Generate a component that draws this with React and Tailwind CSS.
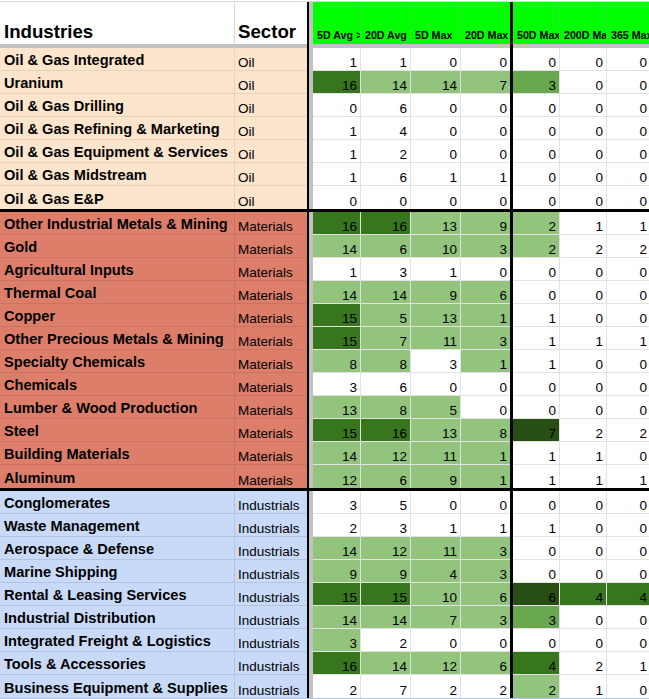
import React from 'react';

const fills = {
  '.': 'bg-white',
  l: 'bg-[#93c47d]',
  m: 'bg-[#6aa84f]',
  d: 'bg-[#38761d]',
  x: 'bg-[#274e13]',
};

const groups = [
  {
    sector: 'Oil',
    bg: 'bg-[#fce5cd]',
    line: 'border-[#e8d2bc]',
    rows: [
      ['Oil & Gas Integrated', [1, 1, 0, 0, 0, 0, 0], '.......'],
      ['Uranium', [16, 14, 14, 7, 3, 0, 0], 'dlllm..'],
      ['Oil & Gas Drilling', [0, 6, 0, 0, 0, 0, 0], '.......'],
      ['Oil & Gas Refining & Marketing', [1, 4, 0, 0, 0, 0, 0], '.......'],
      ['Oil & Gas Equipment & Services', [1, 2, 0, 0, 0, 0, 0], '.......'],
      ['Oil & Gas Midstream', [1, 6, 1, 1, 0, 0, 0], '.......'],
      ['Oil & Gas E&P', [0, 0, 0, 0, 0, 0, 0], '.......'],
    ],
  },
  {
    sector: 'Materials',
    bg: 'bg-[#dd7e6b]',
    line: 'border-[#c87363]',
    rows: [
      ['Other Industrial Metals & Mining', [16, 16, 13, 9, 2, 1, 1], 'ddlll..'],
      ['Gold', [14, 6, 10, 3, 2, 2, 2], 'lllll..'],
      ['Agricultural Inputs', [1, 3, 1, 0, 0, 0, 0], '.......'],
      ['Thermal Coal', [14, 14, 9, 6, 0, 0, 0], 'llll...'],
      ['Copper', [15, 5, 13, 1, 1, 0, 0], 'dlll...'],
      ['Other Precious Metals & Mining', [15, 7, 11, 3, 1, 1, 1], 'dlll...'],
      ['Specialty Chemicals', [8, 8, 3, 1, 1, 0, 0], 'll.l...'],
      ['Chemicals', [3, 6, 0, 0, 0, 0, 0], '.......'],
      ['Lumber & Wood Production', [13, 8, 5, 0, 0, 0, 0], 'lll....'],
      ['Steel', [15, 16, 13, 8, 7, 2, 2], 'ddllx..'],
      ['Building Materials', [14, 12, 11, 1, 1, 1, 0], 'llll...'],
      ['Aluminum', [12, 6, 9, 1, 1, 1, 1], 'llll...'],
    ],
  },
  {
    sector: 'Industrials',
    bg: 'bg-[#c9daf8]',
    line: 'border-[#b2c4e3]',
    rows: [
      ['Conglomerates', [3, 5, 0, 0, 0, 0, 0], '.......'],
      ['Waste Management', [2, 3, 1, 1, 1, 0, 0], '.......'],
      ['Aerospace & Defense', [14, 12, 11, 3, 0, 0, 0], 'llll...'],
      ['Marine Shipping', [9, 9, 4, 3, 0, 0, 0], 'llll...'],
      ['Rental & Leasing Services', [15, 15, 10, 6, 6, 4, 4], 'ddllxdd'],
      ['Industrial Distribution', [14, 14, 7, 3, 3, 0, 0], 'llllm..'],
      ['Integrated Freight & Logistics', [3, 2, 0, 0, 0, 0, 0], 'l......'],
      ['Tools & Accessories', [16, 14, 12, 6, 4, 2, 1], 'dllld..'],
      ['Business Equipment & Supplies', [2, 7, 2, 2, 2, 1, 0], '....l..'],
    ],
  },
];

// widths of the seven number columns (the 4th has the thick black rule after it)
const colWidths = ['w-[48px]', 'w-[50px]', 'w-[50px]', 'w-[49px]', 'w-[47px]', 'w-[47px]', 'w-[44px]'];
const headers = ['5D Avg > 20D Avg', '20D Avg', '5D Max', '20D Max', '50D Max', '200D Max', '365 Max'];

function NumberCells({ values, colors, rowBorder }) {
  return values.map((v, i) => (
    <React.Fragment key={i}>
      <div
        className={`${colWidths[i]} ${fills[colors[i]]} ${rowBorder} ${i === 3 ? '' : 'border-r'} border-[#e2e2e2] shrink-0 flex items-end justify-end pr-[3px] pb-[1px] text-[13.5px] leading-none text-black`}
      >
        {v}
      </div>
      {i === 3 && <div className="w-[3px] shrink-0 bg-black" />}
    </React.Fragment>
  ));
}

function Row({ name, values, colors, group, last }) {
  const rowBorder = last ? '' : 'border-b';
  return (
    <div className="flex h-[23px]">
      <div
        className={`w-[235px] shrink-0 ${group.bg} ${group.line} border-r ${rowBorder} flex items-end pl-[4px] pb-[2px] text-[14.6px] font-bold leading-none text-black whitespace-nowrap overflow-hidden`}
      >
        {name}
      </div>
      <div
        className={`w-[72px] shrink-0 ${group.bg} ${group.line} ${rowBorder} flex items-end pl-[3px] pb-[1px] text-[13.5px] leading-none text-black`}
      >
        {group.sector}
      </div>
      <div className="w-[2px] shrink-0 bg-black" />
      <div className="w-[4px] shrink-0 bg-[#c2c2c2]" />
      <NumberCells values={values} colors={colors} rowBorder={rowBorder} />
    </div>
  );
}

export default function App() {
  return (
    <div className="w-[649px] h-[699px] overflow-hidden bg-white font-['Liberation_Sans',Arial,sans-serif]">
      {/* sliver of the row above */}
      <div className="h-[2px] border-b border-[#d9d9d9]" />

      {/* Header */}
      <div className="flex h-[42px]">
        <div className="w-[235px] shrink-0 border-r border-[#d9d9d9] flex items-end pl-[4px] pb-[2px] text-[18.67px] font-bold leading-none text-black">
          Industries
        </div>
        <div className="w-[72px] shrink-0 flex items-end pl-[3px] pb-[2px] text-[18.67px] font-bold leading-none text-black">
          Sector
        </div>
        <div className="w-[2px] shrink-0 bg-black" />
        <div className="w-[4px] shrink-0 bg-[#c2c2c2]" />
        {headers.map((h, i) => (
          <React.Fragment key={h}>
            <div
              className={`${colWidths[i]} shrink-0 bg-[#00ff00] ${i === 3 ? '' : 'border-r'} border-[#2ee62e] flex items-end pl-[4px] pb-[3px] text-[10.67px] font-bold leading-none text-black whitespace-nowrap overflow-hidden`}
            >
              {h}
            </div>
            {i === 3 && <div className="w-[3px] shrink-0 bg-black" />}
          </React.Fragment>
        ))}
      </div>

      {/* frozen-row divider */}
      <div className="flex h-[4px] bg-[#c2c2c2]">
        <div className="w-[307px] shrink-0" />
        <div className="w-[2px] shrink-0 bg-black" />
        <div className="w-[4px] shrink-0" />
        <div className="w-[197px] shrink-0" />
        <div className="w-[3px] shrink-0 bg-black" />
      </div>

      {groups.map((g, gi) => (
        <div key={g.sector} className={gi < groups.length - 1 ? 'border-b-[3px] border-black' : 'border-b border-[#b2c4e3]'}>
          {g.rows.map(([name, values, colors], ri) => (
            <Row
              key={name}
              name={name}
              values={values}
              colors={colors}
              group={g}
              last={ri === g.rows.length - 1}
            />
          ))}
        </div>
      ))}
    </div>
  );
}
